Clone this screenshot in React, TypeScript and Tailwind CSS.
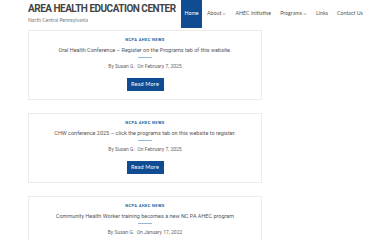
const navItems = [
  { label: "About", caret: true },
  { label: "AHEC Initiative" },
  { label: "Programs", caret: true },
  { label: "Links" },
  { label: "Contact Us" },
];

const posts = [
  {
    title: "Oral Health Conference – Register on the Programs tab of this website.",
    date: "By Susan G.  On February 7, 2025",
  },
  {
    title: "CHW conference 2025 – click the programs tab on this website to register.",
    date: "By Susan G.  On February 7, 2025",
  },
  {
    title: "Community Health Worker training becomes a new NC PA AHEC program",
    date: "By Susan G.  On January 17, 2022",
  },
];

function Caret() {
  return (
    <svg className="ml-[1px] w-[4px] h-[4px]" viewBox="0 0 10 10" fill="none" stroke="currentColor" strokeWidth={1.4}>
      <path d="M2 3.5 5 6.5 8 3.5" />
    </svg>
  );
}

export default function App() {
  return (
    <div className="w-[390px] h-[240px] overflow-hidden bg-white font-['Roboto',sans-serif] text-[#555]">
      <header className="flex items-start pl-[28px] h-[28px]">
        <div className="w-[153px] pt-[3px]">
          <h1 className="text-[10px] leading-[11px] font-bold text-[#444] tracking-[-0.5px] whitespace-nowrap">
            AREA HEALTH EDUCATION CENTER
          </h1>
          <p className="mt-[3px] text-[5px] leading-[6px] text-[#777] font-['Lato',sans-serif]">North Central Pennsylvania</p>
        </div>
        <nav className="flex h-[28px] font-['Lato',sans-serif] text-[5.3px] whitespace-nowrap">
          <a className="flex items-center justify-center h-full w-[21px] bg-[#0f4c92] text-white">Home</a>
          <div className="flex items-center h-full ml-[5px] gap-[9px]">
            {navItems.map((item) => (
              <a key={item.label} className="flex items-center text-[#555]">
                {item.label}
                {item.caret && <Caret />}
              </a>
            ))}
          </div>
        </nav>
      </header>

      <main className="ml-[28px] mt-[2px] w-[234px] flex flex-col gap-[13px]">
        {posts.map((post) => (
          <article key={post.title} className="border border-[#ececec] bg-white flex flex-col items-center pt-[6px] pb-[8px]">
            <span className="text-[4px] leading-[6px] font-bold tracking-[0.4px] text-[#2a5d96]">NCPA AHEC NEWS</span>
            <h2 className="mt-[3px] text-[5.5px] leading-[8px] text-[#555] whitespace-nowrap">{post.title}</h2>
            <div className="mt-[3px] w-[14px] h-px bg-[#9bb6d4]" />
            <p className="mt-[5px] text-[5px] leading-[7px] text-[#666] whitespace-pre">{post.date}</p>
            <button className="mt-[8px] w-[37px] h-[13px] bg-[#0f4c92] text-white text-[5.5px] font-['Lato',sans-serif] tracking-[0.2px]">
              Read More
            </button>
          </article>
        ))}
      </main>
    </div>
  );
}
